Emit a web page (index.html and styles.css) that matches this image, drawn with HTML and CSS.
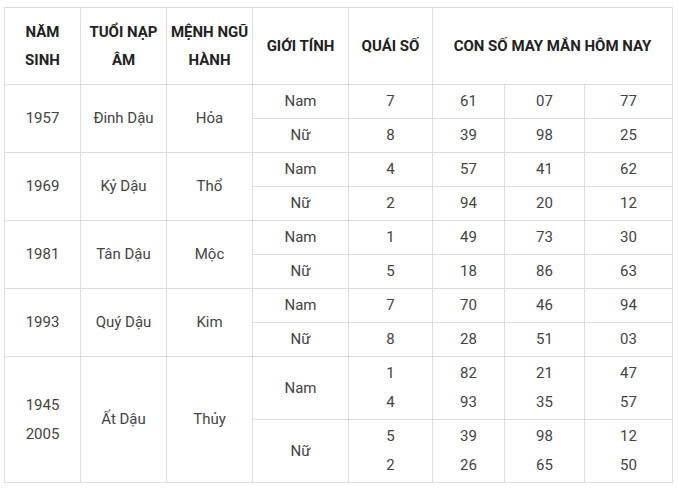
FILE: index.html
```html
<!DOCTYPE html>
<html lang="vi">
<head>
<meta charset="utf-8">
<link rel="stylesheet" href="styles.css">
</head>
<body>
<div class="wrap">
<table class="lucky">
  <colgroup>
    <col class="c1"><col class="c2"><col class="c3"><col class="c4"><col class="c5"><col class="c6"><col class="c7"><col class="c8">
  </colgroup>
  <thead>
    <tr>
      <th>NĂM<br>SINH</th>
      <th>TUỔI NẠP<br>ÂM</th>
      <th>MỆNH NGŨ<br>HÀNH</th>
      <th>GIỚI TÍNH</th>
      <th>QUÁI SỐ</th>
      <th colspan="3">CON SỐ MAY MẮN HÔM NAY</th>
    </tr>
  </thead>
  <tbody>
    <tr><td rowspan="2">1957</td><td rowspan="2">Đinh Dậu</td><td rowspan="2">Hỏa</td><td>Nam</td><td>7</td><td>61</td><td>07</td><td>77</td></tr>
    <tr><td>Nữ</td><td>8</td><td>39</td><td>98</td><td>25</td></tr>
    <tr><td rowspan="2">1969</td><td rowspan="2">Kỷ Dậu</td><td rowspan="2">Thổ</td><td>Nam</td><td>4</td><td>57</td><td>41</td><td>62</td></tr>
    <tr><td>Nữ</td><td>2</td><td>94</td><td>20</td><td>12</td></tr>
    <tr><td rowspan="2">1981</td><td rowspan="2">Tân Dậu</td><td rowspan="2">Mộc</td><td>Nam</td><td>1</td><td>49</td><td>73</td><td>30</td></tr>
    <tr><td>Nữ</td><td>5</td><td>18</td><td>86</td><td>63</td></tr>
    <tr><td rowspan="2">1993</td><td rowspan="2">Quý Dậu</td><td rowspan="2">Kim</td><td>Nam</td><td>7</td><td>70</td><td>46</td><td>94</td></tr>
    <tr><td>Nữ</td><td>8</td><td>28</td><td>51</td><td>03</td></tr>
    <tr><td rowspan="2">1945<br>2005</td><td rowspan="2">Ất Dậu</td><td rowspan="2">Thủy</td><td>Nam</td><td>1<br>4</td><td>82<br>93</td><td>21<br>35</td><td>47<br>57</td></tr>
    <tr><td>Nữ</td><td>5<br>2</td><td>39<br>26</td><td>98<br>65</td><td>12<br>50</td></tr>
  </tbody>
</table>
</div>
</body>
</html>
```

FILE: styles.css
```css
html, body {
  margin: 0;
  padding: 0;
  background: #fff;
}
.wrap {
  padding: 7px 0 0 4px;
}
.lucky {
  border-collapse: collapse;
  table-layout: fixed;
  width: 669px;
  font-family: Roboto, "Liberation Sans", sans-serif;
  font-size: 15px;
  color: #444;
}
.c1 { width: 76px; }
.c2 { width: 86px; }
.c3 { width: 86px; }
.c4 { width: 96px; }
.c5 { width: 84px; }
.c6 { width: 72px; }
.c7 { width: 80px; }
.c8 { width: 88px; }
.lucky th,
.lucky td {
  border: 1px solid #ddd;
  text-align: center;
  vertical-align: middle;
}
.lucky th {
  font-weight: 700;
  color: #222;
  line-height: 28px;
  height: 56px;
  padding: 10px 2px;
}
.lucky td {
  line-height: 29px;
  padding: 2px 4px;
  height: 29px;
}
```
